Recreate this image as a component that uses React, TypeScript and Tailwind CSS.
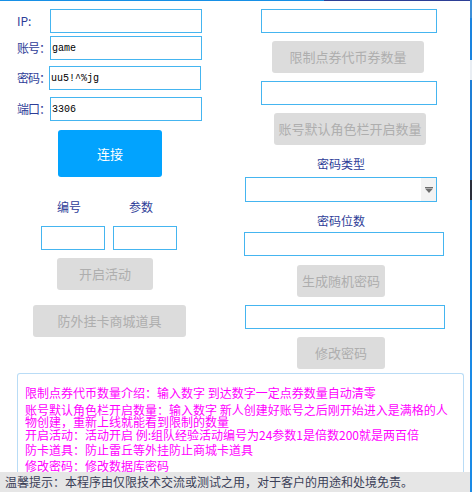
import React from "react";

const cjk = { fontFamily: '"Noto Sans CJK SC", "Noto Sans", sans-serif' };
const mono = { fontFamily: '"Liberation Mono", "DejaVu Sans Mono", monospace' };

function Field({ className = "", value = "" }: { className?: string; value?: string }) {
  return (
    <div
      className={`h-[24px] shrink-0 border border-[#45b5f0] bg-white flex items-center pl-[1px] text-[10px] text-black ${className}`}
      style={mono}
    >
      {value}
    </div>
  );
}

function GrayBtn({ className = "", children }: { className?: string; children: React.ReactNode }) {
  return (
    <div
      className={`h-[32px] shrink-0 rounded-[3px] bg-[#dcdcdc] text-[#aeaeae] text-[13px] flex items-center justify-center ${className}`}
      style={cjk}
    >
      {children}
    </div>
  );
}

function Label({ className = "", children }: { className?: string; children: React.ReactNode }) {
  return (
    <div className={`text-[12px] leading-[14px] text-[#2e3d98] whitespace-nowrap shrink-0 ${className}`} style={cjk}>
      {children}
    </div>
  );
}

export default function App() {
  return (
    <div className="w-[472px] h-[492px] bg-white overflow-hidden flex">
      <div className="w-[470px] flex flex-col">
        <div className="h-px flex shrink-0">
          <div className="w-[324px] bg-[#1790e6]" />
          <div className="flex-1 bg-[#2d3f96]" />
        </div>
        <div className="flex h-[372px] shrink-0">
          {/* Left column */}
          <div className="w-[236px] flex flex-col">
            <div className="mt-[8px] flex items-center">
              <Label className="w-[50px] pl-[17px]">IP:</Label>
              <Field className="w-[152px]" />
            </div>
            <div className="mt-[3px] flex items-center">
              <Label className="w-[50px] pl-[17px] tracking-[-1px]">账号：</Label>
              <Field className="w-[152px]" value="game" />
            </div>
            <div className="mt-[6px] flex items-center">
              <Label className="w-[49px] pl-[17px] tracking-[-1px]">密码：</Label>
              <Field className="w-[152px]" value="uu5!^%jg" />
            </div>
            <div className="mt-[7px] flex items-center">
              <Label className="w-[50px] pl-[17px] tracking-[-1px]">端口：</Label>
              <Field className="w-[152px]" value="3306" />
            </div>
            <div
              className="mt-[9px] ml-[58px] w-[104px] h-[47px] rounded-[3px] bg-[#02a3fe] text-white text-[13px] flex items-center justify-center"
              style={cjk}
            >
              连接
            </div>
            <div className="mt-[23px] flex">
              <Label className="ml-[57px] w-[24px]">编号</Label>
              <Label className="ml-[48px] w-[24px]">参数</Label>
            </div>
            <div className="mt-[12px] flex">
              <Field className="ml-[41px] w-[64px]" />
              <Field className="ml-[8px] w-[64px]" />
            </div>
            <GrayBtn className="mt-[8px] ml-[57px] w-[96px]">开启活动</GrayBtn>
            <GrayBtn className="mt-[15px] ml-[33px] w-[153px]">防外挂卡商城道具</GrayBtn>
          </div>
          {/* Right column */}
          <div className="flex-1 flex flex-col">
            <Field className="mt-[8px] ml-[25px] w-[176px]" />
            <GrayBtn className="mt-[8px] ml-[36px] w-[152px]">限制点券代币券数量</GrayBtn>
            <Field className="mt-[8px] ml-[25px] w-[176px]" />
            <GrayBtn className="mt-[8px] ml-[38px] w-[152px]">账号默认角色栏开启数量</GrayBtn>
            <Label className="mt-[12px] ml-[81px]">密码类型</Label>
            <div className="mt-[6px] ml-[9px] w-[192px] h-[25px] border border-[#45b5f0] flex justify-end">
              <div className="w-[15px] h-full bg-[#f3f3f3] flex items-center justify-center">
                <svg width="8" height="6" viewBox="0 0 8 6">
                  <rect x="0" y="0" width="8" height="1" fill="#6e6e6e" />
                  <path d="M0 1.5 H8 L4 6 Z" fill="#6e6e6e" />
                </svg>
              </div>
            </div>
            <Label className="mt-[12px] ml-[81px]">密码位数</Label>
            <Field className="mt-[4px] ml-[8px] w-[200px]" />
            <GrayBtn className="mt-[9px] ml-[61px] w-[88px]">生成随机密码</GrayBtn>
            <Field className="mt-[8px] ml-[9px] w-[200px]" />
            <GrayBtn className="mt-[8px] ml-[61px] w-[88px]">修改密码</GrayBtn>
          </div>
        </div>
        {/* Info box */}
        <div
          className="ml-[17px] w-[447px] h-[99px] shrink-0 border border-b-0 border-[#b9dcf6] rounded-t-[3px] pl-[7px] pr-[4px] pt-[13px] text-[12px] leading-[12px] text-[#ff00ff] flex flex-col"
          style={cjk}
        >
          <p>限制点券代币数量介绍：输入数字 到达数字一定点券数量自动清零</p>
          <p className="mt-[5px]">账号默认角色栏开启数量：输入数字 新人创建好账号之后刚开始进入是满格的人物创建，重新上线就能看到限制的数量</p>
          <p className="mt-[1px]">开启活动：活动开启 例:组队经验活动编号为24参数1是倍数200就是两百倍</p>
          <p className="mt-[3px]">防卡道具：防止雷丘等外挂防止商城卡道具</p>
          <p className="mt-[4px]">修改密码：修改数据库密码</p>
        </div>
        <div
          className="h-[20px] shrink-0 bg-[#e6e6e6] pl-[5px] flex items-center text-[12px] text-[#3b3f58]"
          style={cjk}
        >
          温馨提示：本程序由仅限技术交流或测试之用，对于客户的用途和处境免责。
        </div>
      </div>
      <div className="w-[2px] flex flex-col">
        <div className="h-[18px] bg-[#3d8fd8]" />
        <div className="h-[42px] bg-[#1a84e0]" />
        <div className="h-[20px] bg-[#e8edf3]" />
        <div className="h-[40px] bg-[#1f7fd6]" />
        <div className="h-[60px] bg-[#1573d0]" />
        <div className="h-[20px] bg-[#2a2f3c]" />
        <div className="h-[120px] bg-[#1586e0]" />
        <div className="h-[30px] bg-[#1d6fc7]" />
        <div className="flex-1 bg-[#1a8ae6]" />
      </div>
    </div>
  );
}
